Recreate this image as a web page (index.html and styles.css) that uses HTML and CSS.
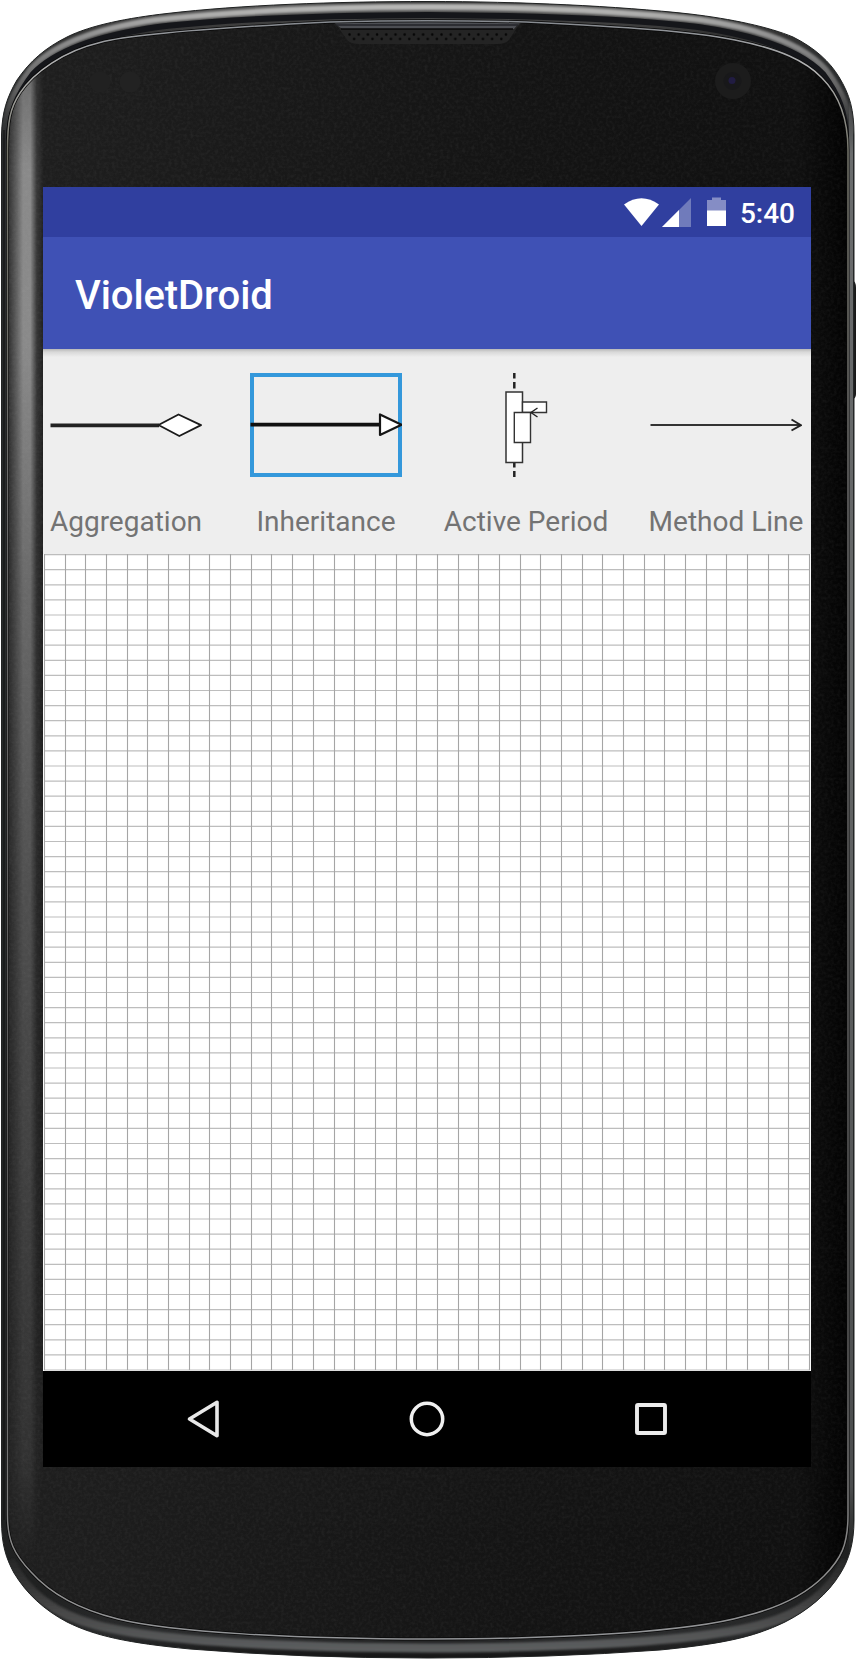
FILE: index.html
```html
<!DOCTYPE html>
<html lang="en">
<head>
<meta charset="utf-8">
<title>VioletDroid</title>
<link rel="stylesheet" href="styles.css">
</head>
<body>
<div class="phone">
  <svg class="phone-frame" viewBox="0 0 856 1659" width="856" height="1659" aria-hidden="true">
    <defs>
      <linearGradient id="rim" x1="0" y1="0" x2="0" y2="1659" gradientUnits="userSpaceOnUse">
        <stop offset="0" stop-color="#222"/><stop offset=".003" stop-color="#555"/>
        <stop offset=".02" stop-color="#333"/><stop offset=".05" stop-color="#292b2c"/>
        <stop offset=".5" stop-color="#262a2a"/><stop offset=".96" stop-color="#202121"/>
        <stop offset=".985" stop-color="#2b2c2d"/><stop offset="1" stop-color="#151515"/>
      </linearGradient>
      <linearGradient id="sheen" x1="8" x2="44" y1="0" y2="0" gradientUnits="userSpaceOnUse">
        <stop offset="0" stop-color="#999" stop-opacity=".12"/>
        <stop offset=".22" stop-color="#999" stop-opacity=".5"/>
        <stop offset=".42" stop-color="#999" stop-opacity=".88"/>
        <stop offset=".62" stop-color="#999" stop-opacity=".88"/>
        <stop offset=".8" stop-color="#999" stop-opacity=".2"/>
        <stop offset="1" stop-color="#999" stop-opacity="0"/>
      </linearGradient>
      <linearGradient id="fade" x1="0" x2="0" y1="80" y2="1560" gradientUnits="userSpaceOnUse">
        <stop offset="0" stop-color="#fff" stop-opacity=".75"/>
        <stop offset=".06" stop-color="#fff"/><stop offset=".18" stop-color="#fff"/>
        <stop offset=".35" stop-color="#fff" stop-opacity=".68"/>
        <stop offset=".55" stop-color="#fff" stop-opacity=".45"/>
        <stop offset=".8" stop-color="#fff" stop-opacity=".27"/>
        <stop offset=".93" stop-color="#fff" stop-opacity=".18"/>
        <stop offset="1" stop-color="#fff" stop-opacity="0"/>
      </linearGradient>
      <linearGradient id="glass" x1="0" x2="1" y1="0" y2="0">
        <stop offset="0" stop-color="#1f1f1f"/><stop offset=".3" stop-color="#191919"/>
        <stop offset=".6" stop-color="#141414"/><stop offset=".94" stop-color="#101010"/>
        <stop offset="1" stop-color="#020202"/>
      </linearGradient>
      <linearGradient id="edge" x1="0" x2="0" y1="20" y2="1640" gradientUnits="userSpaceOnUse">
        <stop offset="0" stop-color="#85898f"/><stop offset=".03" stop-color="#b5b5b5"/>
        <stop offset=".08" stop-color="#74746a"/><stop offset=".3" stop-color="#6a6a6a"/>
        <stop offset=".8" stop-color="#585858"/><stop offset=".97" stop-color="#909090"/>
        <stop offset="1" stop-color="#929497"/>
      </linearGradient>
      <linearGradient id="bright" x1="0" x2="0" y1="0" y2="140" gradientUnits="userSpaceOnUse">
        <stop offset="0" stop-color="#c0c0be"/><stop offset=".25" stop-color="#929292"/>
        <stop offset=".65" stop-color="#606060"/><stop offset="1" stop-color="#444" stop-opacity="0"/>
      </linearGradient>
      <linearGradient id="lower" x1="0" x2="0" y1="1540" y2="1650" gradientUnits="userSpaceOnUse">
        <stop offset="0" stop-color="#333" stop-opacity="0"/><stop offset=".6" stop-color="#444"/>
        <stop offset="1" stop-color="#5c5e5f"/>
      </linearGradient>
      <linearGradient id="side" x1="0" x2="0" y1="95" y2="1560" gradientUnits="userSpaceOnUse">
        <stop offset="0" stop-color="#777" stop-opacity="0"/><stop offset=".04" stop-color="#6a6c6d"/>
        <stop offset=".5" stop-color="#606263"/><stop offset=".95" stop-color="#4a4c4d"/>
        <stop offset="1" stop-color="#444" stop-opacity="0"/>
      </linearGradient>
      <mask id="fadeMask" maskUnits="userSpaceOnUse" x="0" y="0" width="60" height="1659">
        <rect width="60" height="1659" fill="url(#fade)"/>
      </mask>
      <clipPath id="faceClip">
        <path id="face" d="M7.5 150C7.5 122 10 108 20 93C34 72 64 51 100 42.500C133 34 230 27 330 22Q428 19.500 526 22C626 27 690 31 735 40C780 49 806 61 822 78C841 97 848 122 848 150V1515C848 1545 841 1559 824 1576C806 1594 782 1607 745 1616C690 1632 560 1639 428 1639C296 1639 170 1632 118 1619C77 1609 48 1591 31 1572C14 1554 7.500 1541 7.500 1515Z"/>
      </clipPath>
      <clipPath id="bodyClip">
        <path id="body" d="M1.500 135C2 112 7 97 17 80C30 61 45 48 67 37C91 25 128 18 167 13.500C240 5 335 1.500 428 1.500C520 1.500 617 6 690 14C732 19 769 27 793 37C815 48 830 62 839 77C850 95 854 110 854 135V1520C854 1543 849 1560 840 1574C828 1594 807 1611 785 1622C752 1638 720 1644 660 1650Q550 1658 428 1658Q300 1658 190 1649C128 1643 95 1636 67 1622C44 1610 26 1593 14 1573C6 1558 1.500 1545 1.500 1520Z"/>
      </clipPath>
      <filter id="grain" x="0" y="0" width="1" height="1">
        <feTurbulence type="fractalNoise" baseFrequency=".32" numOctaves="2" seed="4"/>
        <feColorMatrix values="0 0 0 0 .7  0 0 0 0 .7  0 0 0 0 .7  .35 .35 0 0 -.27"/>
      </filter>
      <filter id="soft"><feGaussianBlur stdDeviation="1.300"/></filter>
      <pattern id="mesh" width="18.400" height="9.200" x="348" y="32" patternUnits="userSpaceOnUse">
        <circle cx="1.500" cy="2.500" r="1.300" fill="#050505"/><circle cx="10.700" cy="2.500" r="1.300" fill="#050505"/>
        <circle cx="6.100" cy="7" r="1.300" fill="#050505"/><circle cx="15.300" cy="7" r="1.300" fill="#050505"/>
      </pattern>
    </defs>
    <path d="M852 280q4 1 4 8V394q0 5-4 5Z" fill="#181818"/>
    <use href="#body" fill="url(#rim)"/>
    <g clip-path="url(#bodyClip)">
      <path d="M4 140C4 110 14 91 30 70C52 45 93 29 155 20C245 10 340 7 428 7C516 7 611 10 701 20C763 29 804 45 826 70C842 91 851 110 851 140" fill="none" stroke="url(#bright)" stroke-width="6" filter="url(#soft)"/>
      <path d="M9 140C9 112 18 94 33 74C55 51 96 36 158 27Q250 16 428 15Q606 16 698 27C760 36 801 51 823 74C838 94 846 112 846 140" fill="none" stroke="#15161a" stroke-width="6"/>
      <path d="M10 1560C27 1595 57 1615 96 1625Q180 1647 428 1648Q676 1647 760 1625C799 1615 829 1595 846 1560" fill="none" stroke="url(#lower)" stroke-width="9" filter="url(#soft)"/>
      <rect x="849" y="95" width="4" height="1465" fill="url(#side)"/>
      <rect x="3.500" y="130" width="1" height="1390" fill="#111"/>
    </g>
    <use href="#body" fill="none" stroke="#202222" stroke-width="1"/>
    <use href="#face" fill="url(#glass)"/>
    <g clip-path="url(#faceClip)">
      <rect x="7" y="60" width="38" height="1540" fill="url(#sheen)" mask="url(#fadeMask)"/>
      <rect width="856" height="1659" filter="url(#grain)" opacity=".2"/>
      <path d="M330 20Q335 22 340 30L348 41Q352 44 358 44H498Q505 44 509 40L516 29Q520 24 526 20Z" fill="#242424"/>
      <path d="M346 32H511L505 41H351Z" fill="url(#mesh)"/>
      <path d="M332 21L342 29H514Q518 23 526 21Z" fill="#4c4e53"/>
      <path d="M336 25H518" stroke="#222327" stroke-width="1.500"/>
      <path d="M341 29H513" stroke="#090909" stroke-width="1.500"/>
    </g>
    <use href="#face" fill="none" stroke="#080808" stroke-width="3"/>
    <use href="#face" fill="none" stroke="url(#edge)" stroke-width="1.500"/>
    <circle cx="100" cy="82" r="10.500" fill="#212121"/>
    <circle cx="130" cy="82" r="10.500" fill="#222"/>
    <circle cx="733" cy="81" r="18" fill="#1c1c1c"/>
    <circle cx="732.500" cy="81" r="9" fill="#18181a"/>
    <circle cx="732" cy="80.500" r="3.500" fill="#211c42"/>
  </svg>

  <main class="screen">
    <header class="status-bar">
      <svg class="status-icons" viewBox="0 0 106 34" width="106" height="34" aria-hidden="true">
        <path d="M0 8.500Q17.500-4 35 8.500L17.500 30Z" fill="#fff"/>
        <path d="M67 2V31H38Z" fill="#707bbb"/>
        <path d="M55 14V31H38Z" fill="#fff"/>
        <path d="M83 4H88V1.500H97V4H102V15H83Z" fill="#858dc5"/>
        <path d="M83 14.500H102V30H83Z" fill="#fff"/>
      </svg>
      <span class="clock">5:40</span>
    </header>
    <div class="app-bar"><h1 class="app-title">VioletDroid</h1></div>
    <section class="palette">
      <div class="tools">
        <div class="tool">
          <svg class="tool-icon" viewBox="0 0 152 104">
            <path d="M.5 52.300H109" stroke="#222" stroke-width="3.800"/>
            <path d="M108.500 52L128.500 41.500L151 52.200L129.300 63Z" fill="#fff" stroke="#1b1b1b" stroke-width="1.900" stroke-linejoin="round"/>
          </svg>
          <span class="tool-label">Aggregation</span>
        </div>
        <div class="tool">
          <svg class="tool-icon tool-icon-selected" viewBox="0 0 152 104">
            <path d="M.5 51.700H130" stroke="#111" stroke-width="3.800"/>
            <path d="M130 41.500V62L151.500 51.700Z" fill="#fff" stroke="#151515" stroke-width="2.200" stroke-linejoin="round"/>
          </svg>
          <span class="tool-label">Inheritance</span>
        </div>
        <div class="tool">
          <svg class="tool-icon" viewBox="0 0 152 104">
            <path d="M64.300 0V5.500M64.300 9V15.500M64.300 89V94.500M64.300 98V104" stroke="#222" stroke-width="2.500"/>
            <path d="M56 19H72.500V89.500H56Z" fill="#fff" stroke="#333" stroke-width="1.500"/>
            <path d="M72.500 29H96.500V39.500H72.500Z" fill="#fff" stroke="#333" stroke-width="1.400"/>
            <path d="M64.300 39.500H80.500V69.500H64.300Z" fill="#fff" stroke="#333" stroke-width="1.400"/>
            <path d="M87.500 35L81 39.500L87.500 44" fill="none" stroke="#222" stroke-width="1.400"/>
          </svg>
          <span class="tool-label">Active Period</span>
        </div>
        <div class="tool">
          <svg class="tool-icon" viewBox="0 0 152 104">
            <path d="M.5 52H150" stroke="#333" stroke-width="2"/>
            <path d="M141.500 46.500L151 52.200L141.500 57.500" fill="none" stroke="#222" stroke-width="1.900"/>
          </svg>
          <span class="tool-label">Method Line</span>
        </div>
      </div>
    </section>
    <svg class="canvas" viewBox="0 0 768 817" width="768" height="817" aria-label="Diagram canvas">
      <path id="rows" stroke="#bdbdbd" stroke-width="1.200"/>
      <path id="columns" stroke="#a5a5a5" stroke-width="1.100"/>
    </svg>
    <nav class="nav-bar">
      <svg viewBox="0 0 40 40" width="40" height="40"><path d="M6.500 20L34 3.300V36.700Z" fill="none" stroke="#e8e8e8" stroke-width="3.600" stroke-linejoin="round"/></svg>
      <svg viewBox="0 0 40 40" width="40" height="40"><circle cx="20" cy="20" r="15.700" fill="none" stroke="#f0f0f0" stroke-width="3.500"/></svg>
      <svg viewBox="0 0 40 40" width="40" height="40"><rect x="6" y="6" width="28" height="28" rx="1" fill="none" stroke="#ececec" stroke-width="3.900"/></svg>
    </nav>
  </main>
</div>
<script src="grid.js"></script>
</body>
</html>
```
FILE: styles.css
```css
* { box-sizing: border-box; }
body {
  margin: 0;
  background: #fff;
  font-family: Roboto, "Noto Sans", sans-serif;
}
.phone {
  display: grid;
  width: 856px;
  height: 1659px;
  overflow: hidden;
}
.phone-frame, .screen { grid-area: 1 / 1; }
.phone-frame { display: block; }
.screen {
  display: flex;
  flex-direction: column;
  z-index: 1;
  width: 768px;
  height: 1280px;
  margin: 187px 0 0 43px;
  background: #eee;
  overflow: hidden;
}
.status-bar {
  display: flex;
  flex: 0 0 50px;
  align-items: center;
  justify-content: flex-end;
  gap: 10px;
  padding-right: 16px;
  background: #303f9f;
  color: #fff;
}
.status-icons { margin-top: 2px; }
.clock {
  font-size: 28px;
  font-weight: 500;
  line-height: 36px;
  padding-top: 3px;
}
.app-bar {
  display: flex;
  flex: 0 0 112px;
  align-items: center;
  padding: 6px 32px 0;
  background: #3f51b5;
  color: #fff;
}
.app-title {
  margin: 0;
  font-size: 40px;
  font-weight: 500;
  letter-spacing: -0.1px;
  line-height: 48px;
}
.palette {
  flex: 0 0 205px;
  background: linear-gradient(#b8b8b8, #d8d8d8 3px, #eee 8px);
  overflow: hidden;
}
.tools {
  display: grid;
  grid-template-columns: repeat(4, 200px);
  margin-left: -17px;
  padding-top: 24px;
}
.tool {
  display: flex;
  flex-direction: column;
  align-items: center;
  gap: 28px;
}
.tool-icon {
  width: 152px;
  height: 104px;
}
.tool-icon-selected { box-shadow: inset 0 0 0 4px #3498db; }
.tool-label {
  color: #737373;
  font-size: 28px;
  line-height: 33px;
  white-space: nowrap;
}
.canvas {
  display: block;
  flex: 0 0 817px;
  background: #fff;
}
.nav-bar {
  display: flex;
  flex: 0 0 96px;
  align-items: center;
  justify-content: center;
  gap: 184px;
  background: #000;
}
```
FILE: grid.js
```js
const COLUMN_STEP = 20.68;
const ROW_STEP = 15.1;
let columns = "";
let rows = "";
for (let i = 0; i <= 37; i++) {
  columns += `M${Math.round(1 + i * COLUMN_STEP) + 0.5} 0V816`;
}
for (let i = 0; i <= 54; i++) {
  rows += `M1 ${(0.6 + i * ROW_STEP).toFixed(2)}H767`;
}
document.getElementById("columns").setAttribute("d", columns);
document.getElementById("rows").setAttribute("d", rows);
```
